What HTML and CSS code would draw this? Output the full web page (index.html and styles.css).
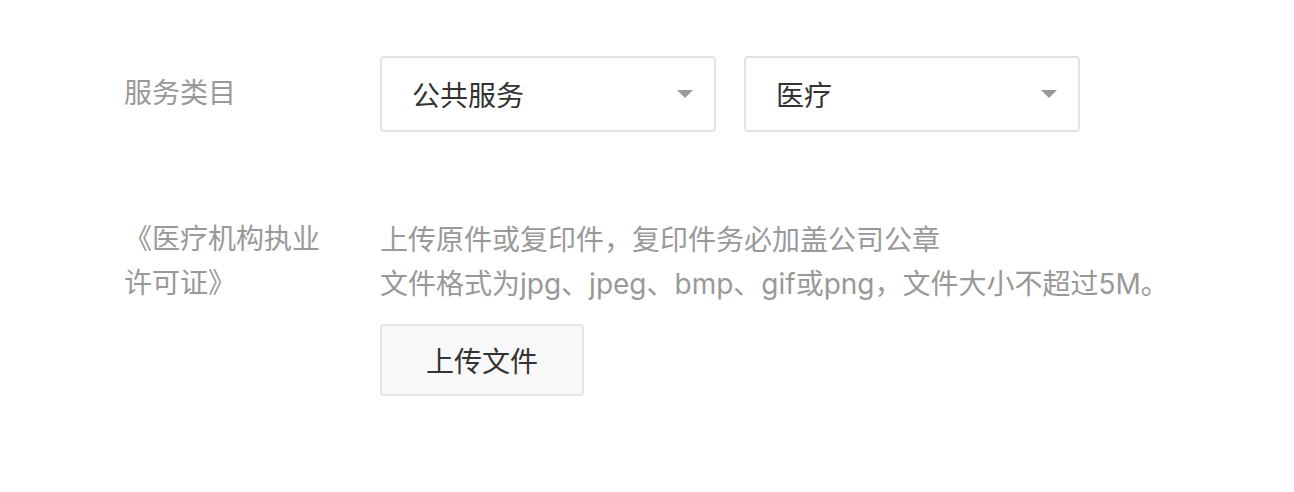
FILE: index.html
```html
<!DOCTYPE html>
<html lang="zh-CN">
<head>
  <meta charset="UTF-8">
  <meta name="viewport" content="width=device-width, initial-scale=1.0">
  <title>服务类目</title>
  <link rel="stylesheet" href="styles.css">
</head>

<body>
  <form class="form">
    <div class="row row-category">
      <label class="label">服务类目</label>
      <div class="selects">
        <div class="select">
          <span>公共服务</span>
          <i class="arrow"></i>
        </div>
        <div class="select">
          <span>医疗</span>
          <i class="arrow"></i>
        </div>
      </div>
    </div>

    <div class="row row-license">
      <label class="label">《医疗机构执业<br>许可证》</label>
      <div class="upload">
        <p class="hint">
          上传原件或复印件，复印件务必加盖公司公章
          <br>
          文件格式为jpg、jpeg、bmp、gif或png，文件大小不超过5M。
        </p>
        <button type="button" class="btn">上传文件</button>
      </div>
    </div>
  </form>
</body>
</html>
```

FILE: styles.css
```css
* {
  margin: 0;
  padding: 0;
  box-sizing: border-box;
  font-family: "Liberation Sans", "Noto Sans CJK SC", sans-serif;
}

body {
  background: #fff;
}

.form {
  padding: 56px 0 0 124px;
}

.row {
  display: flex;
}

.row-category {
  align-items: center;
}

.row-license {
  margin-top: 86px;
}

.label {
  width: 256px;
  flex-shrink: 0;
  font-size: 28px;
  line-height: 44px;
  color: #999;
}

.selects {
  display: flex;
  gap: 28px;
}

.select {
  width: 336px;
  height: 76px;
  display: flex;
  align-items: center;
  justify-content: space-between;
  padding: 0 21px 0 30px;
  border: 2px solid #e3e3e3;
  border-radius: 4px;
  font-size: 28px;
  color: #333;
}

.arrow {
  width: 0;
  height: 0;
  border-left: 8px solid transparent;
  border-right: 8px solid transparent;
  border-top: 8px solid #999;
}

.hint {
  font-family: Inter, "Noto Sans CJK SC", sans-serif;
  font-size: 28px;
  line-height: 44px;
  color: #999;
}

.btn {
  margin-top: 18px;
  width: 204px;
  height: 72px;
  background: #f8f8f8;
  border: 2px solid #e6e6e6;
  border-radius: 4px;
  font-size: 28px;
  color: #333;
  cursor: pointer;
}
```
